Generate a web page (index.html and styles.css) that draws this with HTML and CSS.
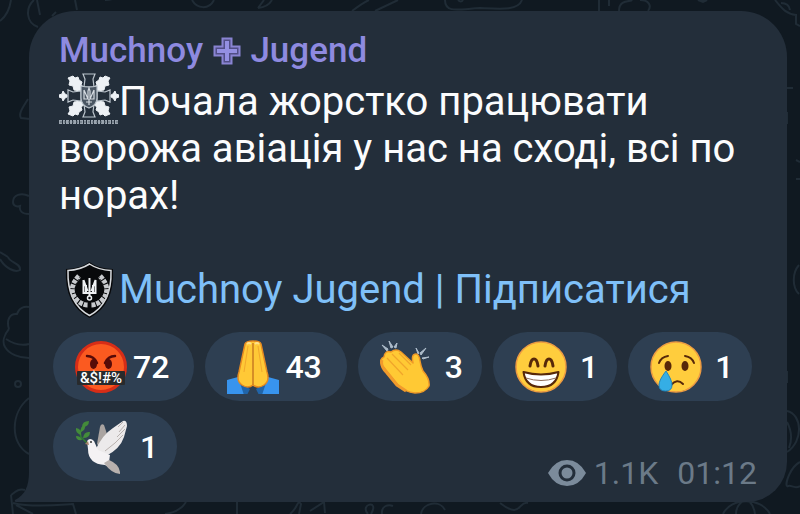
FILE: index.html
```html
<!DOCTYPE html>
<html lang="uk">
<head>
<meta charset="utf-8">
<meta name="viewport" content="width=device-width, initial-scale=1">
<title>Muchnoy Jugend</title>
<link rel="stylesheet" href="styles.css">
</head>
<body>
<svg class="wallpaper" viewBox="0 0 800 514" preserveAspectRatio="none" aria-hidden="true">
  <path d="M11 0Q9 14 0 21M34 0c-9 8-8 23 4 27M37 0l3 15M52 16l4-4M75 0l2 10M105 0q9 0 14-5M192 0c5 9 17 10 22 0M258 8l6-8M258 8q10-1 14-8M352 11q12-9 17-11M375 11l23-11M445 0c0 14 15 9 35 8 20 1 38 3 42-8M458 0q3 3 5 0M599 0v11M609 0v6M619 11c0-12 12-9 13-11M640 0c9 0 12 6 8 11M775 0c8 10 12 14 21 15v9l4 2M781 3q8 0 9 7M28 99c-5 8-10 15-7 19l9 1M29 196c-8-4-16-1-16 6 0 4 4 5 7 4-1 5 2 8 9 8M0 252l8 5M0 259c5 9 15 14 20 11 1-7-10-7-12-13M9 329c-3-9 1-16 8-15 2-6 7-8 12-7M9 329c-5 6-7 13-4 18 4 7 14 11 24 11M6 339q12 8 23 5M29 398c-19 15-19 46 0 56M11 495l2 19M11 495c4-3 8-7 14-5M16 505l17 9M13 503c20 5 45 2 60 1l3 10M165 514q15-2 21-12M237 502v12M290 514c8-6 7-15 11-10l-2 10M310 511l14-9 1 11M368 514c-9-10 12-15 3 0M382 514c-1-8 6-10 11-8M421 514c2-12 19-14 24-4M500 503c22 17 18-3 28 0M723 514c8-17 38-17 47 0M736 514q0-8 7-13M755 514q-1-8-6-13M793 88h-6M787 112v12M800 162l-4-2M800 179h-4M799 265c-7 8-7 22 0 29M787 371v12M787 411c15 3 17 30 0 41M787 422q7 13 2 26M800 462c-10 5-15 22-13 24M787 487c3-4 7 3 13-1"/>
  <circle cx="18" cy="384" r="3"/>
  <path d="M698 0l5 2 4-2z" class="spot"/>
</svg>
<main class="chat">
  <article class="bubble">
    <svg class="tail" viewBox="0 0 60 50" aria-hidden="true"><path d="M15 20C15 34 11 43 1 48Q0 50 3 50H60V20z"/></svg>
    <h1 class="sender">Muchnoy
      <svg class="cross" viewBox="0 0 28 28" role="img" aria-label="хрест"><path d="M9.500 1.500h9v8h8v9h-8v8h-9v-8h-8v-9h8z" fill="#514e86" stroke="#8984d2" stroke-width="2"/><path d="M14 4v20M4 14h20" stroke="#9490e2" stroke-width="4"/></svg>
      Jugend</h1>
    <p class="text"><svg class="emblem" viewBox="0 0 60 52" role="img" aria-label="емблема">
      <g fill="#edf1f5" stroke="#edf1f5" stroke-width="1">
        <path d="M22 18l-7-1-1-4-4-1 1-4-2-3 5-2 2 2 3-1 1 3 3 2-1 3 4 3z"/>
        <path d="M38 18l7-1 1-4 4-1-1-4 2-3-5-2-2 2-3-1-1 3-3 2 1 3-4 3zM22 28l-7 1-1 4-4 1 1 4-2 3 5 2 2-2 3 1 1-3 3-2-1-3 4-3zM38 28l7 1 1 4 4 1-1 4 2 3-5 2-2-2-3 1-1-3-3-2 1-3-4-3z"/>
        <path d="M0 22l3-1 1-3 2 3 2 1v2l-2 1-2 3-1-3-3-1zM60 22l-3-1-1-3-2 3-2 1v2l2 1 2 3 1-3 3-1z"/>
      </g>
      <g fill="#232e3a" stroke="#bcc5cd" stroke-width="1.200">
        <path d="M24 1h12l-2 5 1 8H25l1-8zM24 44h12l-2-5 1-8H25l1 8zM9 17v12l5-2 8 1V18l-8 1zM51 17v12l-5-2-8 1V18l8 1z"/>
        <path d="M22 13q8 2 16 0v12q0 7-8 10-8-3-8-10z" fill="#4a5663"/>
      </g>
      <path d="M25 17v9h4v-8l1-3 1 3v8h4v-9M25 17l4 9M35 17l-4 9M30 26v6M27 29h6" fill="none" stroke="#d4dae0" stroke-width="1.200"/>
      <path d="M0 49h60" stroke="#9aa4ae" stroke-width="4" stroke-dasharray="3 1 2 1"/>
      <path d="M1 49h58" stroke="#5b6671" stroke-width="1" stroke-dasharray="2 2"/>
    </svg>Почала жорстко працювати ворожа авіація у нас на сході, всі по норах!</p>
    <p class="text signature"><svg class="shield" viewBox="0 0 60 58" role="img" aria-label="щит">
      <path d="M30.500 1q9 7 23.500 7 2 36-23.500 49Q5 44 7 8q14 0 23.500-7z" fill="#08090b"/>
      <path d="M30.500 3q9 6 21.500 6.500 1 33-21.500 45Q8 42.500 9 9.500q12-.5 21.500-6.500z" fill="none" stroke="#d7dadd" stroke-width="1.500"/>
      <path d="M20 15q-13 14-1 25 5 4 10 4M41 15q13 14 1 25-5 4-10 4" fill="none" stroke="#c8cacd" stroke-width="5" stroke-dasharray="4 1"/>
      <path d="M22 15q-11 13-1 23M39 15q11 13 1 23" fill="none" stroke="#08090b" stroke-width="1" stroke-dasharray="2 2"/>
      <path d="M24.500 19v13h12V19l-4 11M24.500 19l4 11M30.500 17v18M27 24v7M34 24v7" fill="none" stroke="#eef0f2" stroke-width="2"/>
      <circle cx="30.500" cy="37" r="2" fill="none" stroke="#eef0f2" stroke-width="1.500"/>
    </svg><a href="#subscribe">Muchnoy Jugend | Підписатися</a></p>
    <div class="reactions">
      <button class="pill double" type="button"><svg class="emoji" viewBox="0 0 52 54" role="img" aria-label="лють">
        <circle cx="26" cy="27" r="24.500" fill="#fb5a20" stroke="#d72d17" stroke-width="3"/>
        <path d="M12 16q7 0 10 7M40 16q-7 0-10 7" fill="none" stroke="#570b08" stroke-width="2.500" stroke-linecap="round"/>
        <ellipse cx="18.500" cy="24" rx="3.500" ry="5" fill="#570b08"/><ellipse cx="33.500" cy="24" rx="3.500" ry="5" fill="#570b08"/>
        <rect x="2" y="31" width="48" height="14" rx="1" fill="#282a2c"/>
        <text x="26" y="43" text-anchor="middle" class="curse">&amp;$!#%</text>
      </svg><span class="count">72</span></button>
      <button class="pill double" type="button"><svg class="emoji" viewBox="0 0 52 54" role="img" aria-label="молитва">
        <path d="M0 40l11-3 8 13v5H0zM52 40l-11-3-8 13v5h19z" fill="#3894ee"/>
        <path d="M11 37l3 6 9 6-3 6h-3zM41 37l-3 6-9 6 3 6h3z" fill="#2165a9"/>
        <path d="M18 4q1-3 8-3 7 0 8 3l6 28q3 9-3 13-6 4-11 0-5 4-11 0-6-4-3-13z" fill="#ffc936" stroke="#e58a21" stroke-width="1.500"/>
        <path d="M26 3v42" fill="none" stroke="#c97a22" stroke-width="1.500"/>
        <path d="M21 6l-4 26M31 6l4 26" fill="none" stroke="#f2a82c" stroke-width="1"/>
        <path d="M20 4q2-2 4 0M28 4q2-2 4 0" fill="none" stroke="#ffe08b" stroke-width="2"/>
      </svg><span class="count">43</span></button>
      <button class="pill" type="button"><svg class="emoji" viewBox="0 0 52 54" role="img" aria-label="оплески">
        <path d="M2 5l6 4-1 2zM9 1l4 6-2 1zM17 3l-1 5-2-1zM36 8l2 6 1-1zM46 8l-5 7-1-2zM49 17l-6 2-1-1z" fill="#aebdcb" stroke="#aebdcb"/>
        <path d="M2 25q-3-6 2-8 1-7 7-5 5-4 10 0l12 11q-2-9 3-9 3 0 4 7 1 6 3 10 7 8 6 15-4 7-14 7-10-1-17-8z" fill="#ffc934" stroke="#ef9927" stroke-width="1.500" stroke-linejoin="round"/>
        <path d="M7 18l16 17M12 14l16 16M19 13l12 12" fill="none" stroke="#f0a52b" stroke-width="1.200"/>
        <path d="M2 20q-2 6 5 13l10 12 9 6" fill="none" stroke="#f19a2c" stroke-width="3"/>
      </svg><span class="count">3</span></button>
      <button class="pill" type="button"><svg class="emoji" viewBox="0 0 52 54" role="img" aria-label="усмішка">
        <circle cx="26" cy="27" r="25" fill="#ffcd3d" stroke="#ed9b42" stroke-width="1.500"/>
        <path d="M15 26q1-7 4-7t4 7M30 26q1-7 4-7t4 7" fill="none" stroke="#572809" stroke-width="3" stroke-linecap="round"/>
        <path d="M8.500 32q17.500 5 35 0-2 15-17.500 15T8.500 32z" fill="#fff" stroke="#572809" stroke-width="2" stroke-linejoin="round"/>
        <path d="M11 38q15 5 30 0" fill="none" stroke="#8d6b58" stroke-width="1"/>
      </svg><span class="count">1</span></button>
      <button class="pill" type="button"><svg class="emoji" viewBox="0 0 52 54" role="img" aria-label="сльоза">
        <circle cx="26" cy="27" r="25" fill="#ffcd3d" stroke="#ed9b42" stroke-width="1.500"/>
        <path d="M9 23q2-6 9-7M35 16q7 1 9 7M21 45q6-7 12-1" fill="none" stroke="#572809" stroke-width="2" stroke-linecap="round"/>
        <ellipse cx="18" cy="26" rx="3.500" ry="5" fill="#572809"/><ellipse cx="35" cy="26" rx="3.500" ry="5" fill="#572809"/>
        <path d="M16 31q6 9 6 14 0 6-6.500 6T9 45q0-5 7-14z" fill="#35aee5" stroke="#2087bd"/>
      </svg><span class="count">1</span></button>
      <button class="pill" type="button"><svg class="emoji" viewBox="0 0 52 54" role="img" aria-label="голуб">
        <path d="M22 24l3-17q1-4 4-2l3 9-6 15z" fill="#aaa4a1"/>
        <path d="M20 31Q27 15 38 8L48 1q4-1 4 5l-3 11Q45 29 31 36z" fill="#eceaeb"/>
        <path d="M12 21q3-4 7 0l4 9 12 5-1 7q4 2 6 5-5 2-10-2-17-1-17-16z" fill="#f4f2f4"/>
        <path d="M29 43l5-3q10 4 11 12v2q-8 0-16-11z" fill="#b8b1ae"/>
        <path d="M43 7l5-5M44 12l6-7M42 17l8-8M30 31Q41 23 48 15" stroke="#b8b1ae" fill="none"/>
        <path d="M12 23L6 17Q3 10 12 3" fill="none" stroke="#2f7b32" stroke-width="1.500"/>
        <path d="M6 15q-6-2-5-7 6 1 5 7zM6 12q-1-6 4-7 1 5-4 7zM7 7q0-6 7-6 0 6-7 6zM8 18q1-7 7-6 0 6-7 6zM7 20q-6 1-6-4 5 0 6 4z" fill="#438b3a"/>
        <circle cx="16" cy="22" r="1" fill="#333"/><path d="M13 21l-3 3 4 1z" fill="#a7836b"/>
      </svg><span class="count">1</span></button>
    </div>
    <footer class="meta">
      <svg class="eye" viewBox="0 0 38 26" role="img" aria-label="перегляди"><path d="M0 13Q7 0 19 0t19 13q-7 13-19 13T0 13z"/><circle cx="19" cy="13" r="7" fill="none" stroke="#232e3a" stroke-width="3"/></svg>
      <span>1.1K</span>
      <time datetime="01:12">01:12</time>
    </footer>
  </article>
</main>
</body>
</html>
```
FILE: styles.css
```css
* {
  box-sizing: border-box;
}

body {
  margin: 0;
  min-height: 100vh;
  background: #101921;
  color: #fbfcfd;
  font-family: Roboto, "Noto Sans", sans-serif;
}

.wallpaper {
  position: absolute;
  inset: 0;
  width: 100%;
  height: 100%;
  fill: none;
  stroke: #202c36;
  stroke-width: 2;
}

.wallpaper .spot {
  fill: #202c36;
}

.chat {
  position: relative;
  padding: 11px 13px 12px 29px;
}

.bubble {
  position: relative;
  padding: 16px 30px 10px;
  border-radius: 46px 46px 40px 0;
  background: #232e3a;
}

.tail {
  position: absolute;
  left: -15px;
  bottom: 0;
  width: 60px;
  height: 50px;
  fill: #232e3a;
}

.sender {
  margin: 0;
  color: #8e8ae0;
  font-size: 35px;
  font-weight: 500;
  line-height: 48px;
}

.cross {
  width: 28px;
  height: 28px;
  margin: 0 1px;
  vertical-align: -3px;
}

.text {
  margin: 3px 0 0;
  font-size: 40px;
  line-height: 47px;
}

.signature {
  margin-top: 47px;
  color: #7fc0f8;
}

.signature a {
  color: inherit;
  text-decoration: none;
}

.emblem {
  width: 60px;
  height: 52px;
  margin: -10px 0;
  vertical-align: 0;
}

.shield {
  width: 60px;
  height: 58px;
  margin: -10px 0;
  vertical-align: -6px;
}

.reactions {
  position: relative;
  display: flex;
  flex-wrap: wrap;
  gap: 11px;
  margin: 19px -24px 0 -6px;
}

.pill {
  display: flex;
  align-items: center;
  height: 69px;
  padding: 0 19px 0 22px;
  gap: 13px;
  border: 0;
  border-radius: 35px;
  background: #2e3f52;
  color: #fff;
  font: 500 32px/38px Roboto, "Noto Sans", sans-serif;
}

.pill.double {
  padding-right: 25px;
  gap: 6px;
}

.emoji {
  width: 52px;
  height: 54px;
}

.curse {
  fill: #fff;
  font: 500 15px Roboto, sans-serif;
}

.meta {
  display: flex;
  align-items: center;
  justify-content: flex-end;
  margin-top: -27px;
  color: #6b7a88;
  font-size: 32px;
  line-height: 38px;
}

.eye {
  width: 38px;
  height: 26px;
  margin-right: 8px;
  fill: #7b8b9b;
}

.meta time {
  margin-left: 19px;
}
```
